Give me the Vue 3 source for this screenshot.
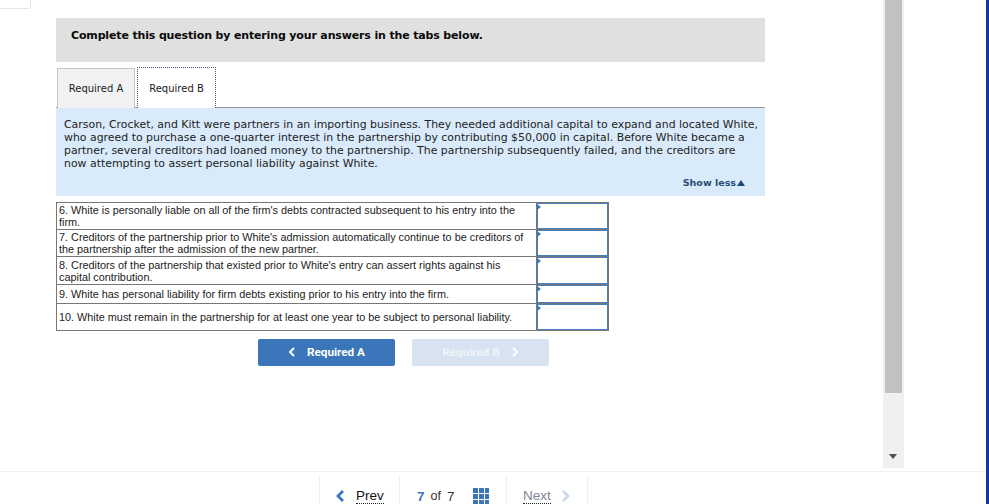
<script setup>
const rows = [
  { text: "6. White is personally liable on all of the firm's debts contracted subsequent to his entry into the firm.", h: 26 },
  { text: "7. Creditors of the partnership prior to White's admission automatically continue to be creditors of the partnership after the admission of the new partner.", h: 26 },
  { text: "8. Creditors of the partnership that existed prior to White's entry can assert rights against his capital contribution.", h: 27 },
  { text: '9. White has personal liability for firm debts existing prior to his entry into the firm.', h: 18 },
  { text: '10. White must remain in the partnership for at least one year to be subject to personal liability.', h: 26 }
]
</script>

<template>
  <div class="page">
    <div class="corner"></div>
    <div class="edge"></div>
    <div class="body">
      <main class="content">
        <div class="banner">Complete this question by entering your answers in the tabs below.</div>

        <div class="tabs">
          <button class="tab">Required A</button>
          <button class="tab active">Required B</button>
        </div>

        <div class="scenario">
          <p>Carson, Crocket, and Kitt were partners in an importing business. They needed additional capital to expand and located White, who agreed to purchase a one-quarter interest in the partnership by contributing $50,000 in capital. Before White became a partner, several creditors had loaned money to the partnership. The partnership subsequently failed, and the creditors are now attempting to assert personal liability against White.</p>
          <div class="show-less">Show less<span class="up"></span></div>
        </div>

        <table class="answers">
          <tbody>
            <tr v-for="row in rows" :key="row.text">
              <td class="statement" :style="{ height: row.h + 'px' }">{{ row.text }}</td>
              <td class="answer"><span class="cell-box"><span class="flag"></span></span></td>
            </tr>
          </tbody>
        </table>

        <div class="nav-buttons">
          <button class="nav-btn">
            <svg width="8" height="10" viewBox="0 0 8 10"><path d="M6 1 2 5l4 4" fill="none" stroke="#fff" stroke-width="2"/></svg>
            Required A
          </button>
          <button class="nav-btn off">
            Required B
            <svg width="8" height="10" viewBox="0 0 8 10"><path d="M2 1l4 4-4 4" fill="none" stroke="#fff" stroke-width="2"/></svg>
          </button>
        </div>
      </main>

      <aside class="scrollbar">
        <div class="thumb-wrap"><div class="thumb"></div></div>
        <div class="track"><span class="down"></span></div>
      </aside>
    </div>

    <footer class="footer">
      <div class="pager">
        <div class="pg prev">
          <svg width="10" height="14" viewBox="0 0 10 14"><path d="M8 2 3 7l5 5" fill="none" stroke="#3b76bb" stroke-width="2.8"/></svg>
          <span class="pg-link">Prev</span>
        </div>
        <div class="pg count">
          <b>7</b><span class="of">of</span><span class="total">7</span>
          <span class="grid"><i v-for="n in 9" :key="n"></i></span>
        </div>
        <div class="pg next">
          <span class="pg-link">Next</span>
          <svg width="10" height="14" viewBox="0 0 10 14"><path d="M2 2l5 5-5 5" fill="none" stroke="#c9d9ec" stroke-width="2.8"/></svg>
        </div>
      </div>
    </footer>
  </div>
</template>

<style>
html, body {
  margin: 0;
  background: #fff;
  overflow: hidden;
}
</style>

<style scoped>
.page {
  position: relative;
  width: 989px;
  height: 504px;
  overflow: hidden;
  font-family: "DejaVu Sans", Verdana, sans-serif;
  color: #111;
}

.corner {
  position: absolute;
  left: -10px;
  top: -10px;
  width: 39px;
  height: 17px;
  border: 1px solid #e6e6e6;
  border-radius: 3px;
}

.edge {
  position: absolute;
  top: 0;
  right: 0;
  bottom: 0;
  width: 3px;
  background: #0c3c94;
}

.body {
  display: flex;
  height: 471px;
  border-bottom: 1px solid #efefef;
}

.content {
  width: 709px;
  margin-left: 56px;
  padding-top: 18px;
}

.banner {
  height: 44px;
  padding-left: 15px;
  background: #e0e0e0;
  font-size: 11px;
  letter-spacing: -0.15px;
  font-weight: 700;
  line-height: 36px;
  color: #0a0a0a;
}

.tabs {
  display: flex;
  gap: 2px;
  height: 40px;
  margin-top: 5px;
  padding-left: 1px;
  border-bottom: 1px solid #999;
}

.tab {
  width: 78px;
  height: 40px;
  margin-top: 1px;
  border: 1px solid #c4c4c4;
  border-bottom: 0;
  background: #f2f2f2;
  font-family: inherit;
  font-size: 10px;
  color: #222;
  padding: 0;
}

.tab.active {
  width: 79px;
  margin-top: 0;
  height: 41px;
  border: 1px dotted #44597c;
  border-bottom: 0;
  background: #fff;
}

.scenario {
  height: 88px;
  background: #d9ebfa;
  position: relative;
}

.scenario p {
  margin: 0;
  padding: 10px 7px 0 8px;
  font-size: 10.91px;
  line-height: 13px;
  color: #222;
}

.show-less {
  position: absolute;
  right: 20px;
  top: 69px;
  display: flex;
  align-items: center;
  gap: 1px;
  font-size: 9.5px;
  font-weight: 700;
  color: #2a4d74;
}

.up {
  width: 0;
  height: 0;
  border-left: 4px solid transparent;
  border-right: 4px solid transparent;
  border-bottom: 6px solid #1c4a7c;
}

.answers {
  width: 553px;
  margin-top: 6px;
  border-collapse: collapse;
  font-family: "Liberation Sans", Arial, sans-serif;
  font-size: 10.85px;
  line-height: 12px;
  color: #222;
}

.answers td {
  border: 1px solid #777;
  padding: 0;
}

.statement {
  padding: 0 10px 0 2px !important;
}

.answer {
  width: 71px;
  position: relative;
}

.cell-box {
  position: absolute;
  inset: 0;
  border: 1px solid #4a7fbd;
}

.flag {
  position: absolute;
  left: -1px;
  top: 0;
  border-left: 4px solid #3b76bb;
  border-top: 3px solid transparent;
  border-bottom: 3px solid transparent;
}

.nav-buttons {
  display: flex;
  gap: 17px;
  margin: 8px 0 0 202px;
}

.nav-btn {
  display: flex;
  align-items: center;
  justify-content: center;
  gap: 11px;
  box-sizing: border-box;
  width: 137px;
  height: 27px;
  padding: 0 0 2px;
  border: 0;
  border-radius: 2px;
  background: #3b76bb;
  color: #fff;
  font-family: Roboto, sans-serif;
  font-size: 11.7px;
  font-weight: 700;
}

.nav-btn.off {
  background: #d8e3f1;
  color: #eef3f9;
}

.scrollbar {
  display: flex;
  flex-direction: column;
  width: 21px;
  height: 468px;
  margin-left: 118px;
  background: #f0f0f0;
}

.thumb-wrap {
  height: 393px;
  padding: 0 2px;
}

.thumb {
  height: 100%;
  background: #c1c1c1;
}

.track {
  flex: 1;
  position: relative;
}

.down {
  position: absolute;
  left: 6px;
  bottom: 9px;
  border-top: 5px solid #4d4d4d;
  border-left: 4.5px solid transparent;
  border-right: 4.5px solid transparent;
}

.footer {
  display: flex;
  height: 32px;
  padding-left: 319px;
}

.pager {
  display: flex;
  height: 40px;
  margin-top: 4px;
  border-left: 1px solid #eee;
}

.pg {
  display: flex;
  align-items: center;
  box-sizing: border-box;
  height: 40px;
  border-right: 1px solid #eee;
  font-family: "Liberation Sans", Arial, sans-serif;
  font-size: 13.5px;
}

.prev {
  width: 80px;
  padding-left: 15px;
  gap: 11px;
}

.count {
  width: 107px;
  padding-left: 17px;
  color: #333;
}

.count b {
  color: #3b76bb;
}

.of {
  margin: 0 6px;
  font-size: 12.5px;
}

.grid {
  display: grid;
  grid-template-columns: repeat(3, 1fr);
  grid-auto-rows: 5px;
  gap: 1px;
  width: 16px;
  margin-left: 19px;
}

.grid i {
  background: #3b76bb;
}

.next {
  width: 81px;
  padding-left: 16px;
  gap: 10px;
  color: #7d8894;
}

.pg-link {
  border-bottom: 1px dotted #222;
  line-height: 14px;
}
</style>
